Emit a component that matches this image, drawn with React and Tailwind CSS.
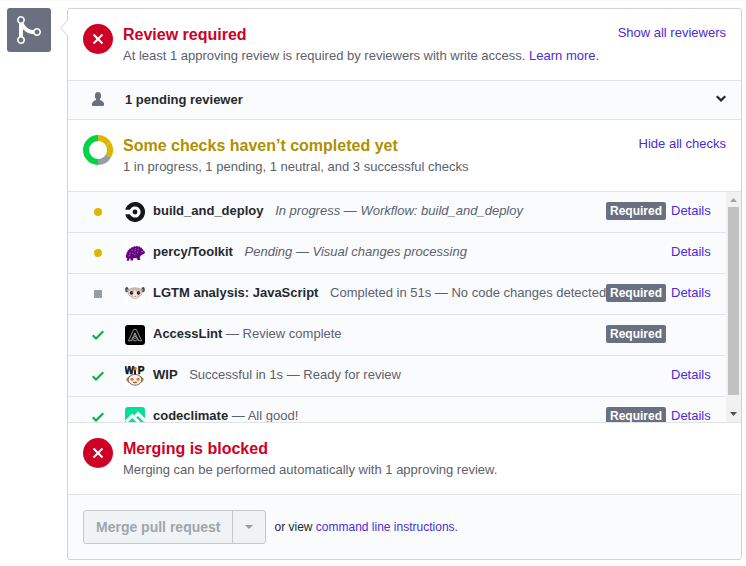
import React from "react";

function XIcon() {
  return (
    <svg width="12" height="16" viewBox="0 0 12 16" fill="currentColor" aria-hidden="true">
      <path d="M7.48 8l3.75 3.75-1.48 1.48L6 9.48l-3.75 3.75-1.48-1.48L4.52 8 .77 4.25l1.48-1.48L6 6.52l3.75-3.75 1.48 1.48L7.48 8z" />
    </svg>
  );
}

function CheckIcon() {
  return (
    <svg width="12" height="16" viewBox="0 0 12 16" fill="currentColor" aria-hidden="true">
      <path d="M12 5l-8 8-4-4 1.5-1.5L4 10l6.5-6.5L12 5z" />
    </svg>
  );
}

function PersonIcon() {
  return (
    <svg width="12" height="16" viewBox="0 0 12 16" fill="currentColor" aria-hidden="true">
      <path d="M12 14.002a.998.998 0 0 1-.998.998H1.001A1 1 0 0 1 0 13.999V13c0-2.633 4-4 4-4s.229-.409 0-1c-.841-.62-.944-1.59-1-4 .173-2.413 1.867-3 3-3s2.827.586 3 3c-.056 2.41-.159 3.38-1 4-.229.59 0 1 0 1s4 1.367 4 4v1.002z" />
    </svg>
  );
}

function ChevronDownIcon() {
  return (
    <svg width="10" height="16" viewBox="0 0 10 16" fill="currentColor" aria-hidden="true">
      <path d="M5 11L0 6l1.5-1.5L5 7.75 8.5 4.5 10 6l-5 5z" />
    </svg>
  );
}

function MergeIcon() {
  return (
    <svg width="24" height="32" viewBox="0 0 12 16" fill="currentColor" aria-hidden="true">
      <path d="M10 7c-.73 0-1.38.41-1.73 1.02V8C7.22 7.98 6 7.64 5.14 6.98c-.75-.58-1.5-1.61-1.89-2.44A1.993 1.993 0 0 0 2 .99C.89.99 0 1.89 0 3a2 2 0 0 0 1 1.72v6.56c-.59.35-1 .99-1 1.72 0 1.11.89 2 2 2a1.993 1.993 0 0 0 1-3.72V7.67c.67.7 1.44 1.27 2.3 1.69.86.42 2.03.63 2.97.64v-.02c.36.61 1 1.02 1.73 1.02 1.11 0 2-.89 2-2 0-1.11-.89-2-2-2zm-6.8 6c0 .66-.55 1.2-1.2 1.2-.65 0-1.2-.55-1.2-1.2 0-.65.55-1.2 1.2-1.2.65 0 1.2.55 1.2 1.2zM2 4.2C1.34 4.2.8 3.65.8 3c0-.65.55-1.2 1.2-1.2.65 0 1.2.55 1.2 1.2 0 .65-.55 1.2-1.2 1.2zm8 6c-.66 0-1.2-.55-1.2-1.2 0-.65.55-1.2 1.2-1.2.65 0 1.2.55 1.2 1.2 0 .65-.55 1.2-1.2 1.2z" />
    </svg>
  );
}

function ProgressDonut() {
  return (
    <svg width="30" height="30" viewBox="0 0 30 30" fill="none" strokeWidth="6" aria-hidden="true">
      <path d="M15 3 A12 12 0 0 1 25.39 9" stroke="#dbb700" />
      <path d="M25.39 9 A12 12 0 0 1 25.39 21" stroke="#dbb700" />
      <path d="M25.39 21 A12 12 0 0 1 15 27" stroke="#959da5" />
      <path d="M15 27 A12 12 0 0 1 15 3" stroke="#00d346" />
    </svg>
  );
}

function CircleLogo() {
  return (
    <svg width="20" height="20" viewBox="0 0 20 20" aria-hidden="true">
      <circle cx="10" cy="10" r="2.4" fill="#161616" />
      <path
        d="M0.3 7.8 A10 10 0 1 1 0.3 12.2 H4.9 A5.6 5.6 0 1 0 4.9 7.8 Z"
        fill="#161616"
      />
    </svg>
  );
}

function PercyLogo() {
  return (
    <svg width="20" height="20" viewBox="0 0 20 20" aria-hidden="true">
      <rect width="20" height="20" rx="3" fill="#fff" />
      <path
        d="M1 14.6 L0.8 12 L1.6 11.4 L1.5 9.6 L2.5 9.2 L2.6 7.4 L4 7.1 L4.4 5.4 L6 5.4 L6.8 3.9 L8.2 4.3 L9.2 3 L10.6 3.7 L12 2.7 L13 3.7 L14.6 3.2 L15 4.5 L16.6 4.6 L17 5.9 L18.2 6.3 L18.3 7.6 L20 8.8 L19.6 10.4 L17.6 11.6 L15.4 13 L14.8 15 L15.4 17 L12.4 17 L12 15.2 L8.6 15 L8 17.6 L5.4 17.6 L5.6 15.6 L4.4 15.4 L4 17.8 L1.4 17.8 L2.4 15.8 Z"
        fill="#650380"
      />
      <path
        d="M4 10.6 l1.8-.8 M3.6 13 l1.8-.9 M6.4 7.6 l1.7-.7 M6.8 10.6 l1.6-.9 M9.4 8.2 l1.7-.9 M9.8 6 l1.3-.6 M12.6 6.4 l1.5-.5 M9 12 l1.6-.9 M12 9.6 l1.5-.8"
        stroke="#c99ad8"
        strokeWidth="0.6"
      />
      <circle cx="17" cy="8.8" r="0.5" fill="#fff" />
    </svg>
  );
}

function LgtmLogo() {
  return (
    <svg width="20" height="20" viewBox="0 0 20 20" aria-hidden="true">
      <rect width="20" height="20" rx="3" fill="#fff" />
      <ellipse cx="1.9" cy="5.6" rx="1.7" ry="2.7" fill="#40363b" />
      <ellipse cx="18.1" cy="5.6" rx="1.7" ry="2.7" fill="#40363b" />
      <ellipse cx="2.3" cy="6" rx="0.8" ry="1.6" fill="#a58f95" />
      <ellipse cx="17.7" cy="6" rx="0.8" ry="1.6" fill="#a58f95" />
      <path d="M10 3.2 C15.4 3.2 17.8 6 17.4 9 C17 12 14.4 12.6 12.8 14 C11.6 15.3 8.4 15.3 7.2 14 C5.6 12.6 3 12 2.6 9 C2.2 6 4.6 3.2 10 3.2Z" fill="#cbb4b0" />
      <path d="M10 5.4 Q12.4 9.6 12.6 12 Q12.4 14.6 10 14.6 Q7.6 14.6 7.4 12 Q7.6 9.6 10 5.4Z" fill="#efe2df" />
      <circle cx="6.4" cy="8.9" r="2.5" fill="#f3eae8" />
      <circle cx="13.6" cy="8.9" r="2.5" fill="#f3eae8" />
      <circle cx="6.5" cy="8.9" r="1.8" fill="#2d1c24" />
      <circle cx="13.5" cy="8.9" r="1.8" fill="#2d1c24" />
      <circle cx="7" cy="8.4" r="0.4" fill="#fff" />
      <circle cx="14" cy="8.4" r="0.4" fill="#fff" />
      <path d="M9 12 H11 L10 13.1Z" fill="#a2555f" />
    </svg>
  );
}

function AccessLintLogo() {
  return (
    <svg width="20" height="20" viewBox="0 0 20 20" fill="none" aria-hidden="true">
      <rect width="20" height="20" rx="3" fill="#000" />
      <path
        d="M8.8 4.4 H11.2 L16.6 15.8 H13.8 L10 8 L6.2 15.8 H3.4 Z M10 8 V11 M7.4 13.4 L10 11 L12.6 13.4 M6.2 15.8 L10 12.8 L13.8 15.8 M8.2 15.8 H11.8"
        stroke="#b5b5b5"
        strokeWidth="0.8"
      />
    </svg>
  );
}

function WipLogo() {
  return (
    <svg width="20" height="20" viewBox="0 0 20 20" aria-hidden="true">
      <rect width="20" height="20" rx="3" fill="#fff" />
      <ellipse cx="10" cy="13.6" rx="8.2" ry="4" fill="#e5bd1b" stroke="#5a5048" strokeWidth="0.8" />
      <ellipse cx="10" cy="13.8" rx="6.8" ry="5.4" fill="#f5f1e8" stroke="#5a5048" strokeWidth="0.8" />
      <circle cx="7" cy="13.2" r="1.5" fill="#ee6a1c" />
      <circle cx="13" cy="13.2" r="1.5" fill="#ee6a1c" />
      <path d="M8 16.2 Q10 17.6 12 16.2Z" fill="#c3322d" stroke="#8c2b24" strokeWidth="0.5" />
      <path d="M10 3 V8.6" stroke="#222" strokeWidth="2" />
      <circle cx="10" cy="2.6" r="1.8" fill="#ee6a1c" />
      <text
        x="-0.4"
        y="8.4"
        fontSize="10"
        fontWeight="700"
        fontFamily="Liberation Sans, sans-serif"
        fill="#111"
        stroke="#111"
        strokeWidth="0.5"
      >
        W
      </text>
      <text
        x="12.8"
        y="8.4"
        fontSize="10"
        fontWeight="700"
        fontFamily="Liberation Sans, sans-serif"
        fill="#111"
        stroke="#111"
        strokeWidth="0.5"
      >
        P
      </text>
    </svg>
  );
}

function CodeClimateLogo() {
  return (
    <svg width="20" height="20" viewBox="0 0 20 20" aria-hidden="true">
      <rect width="20" height="20" rx="3" fill="#00e096" />
      <path d="M13 4.2 L20 11.2 V14.8 L18.4 14.4 L13 9 L11.3 10.6 L9.1 8.2 Z" fill="#fff" />
      <path d="M7.2 6.4 L15.2 14.4 L13 16.6 L7.2 11 L2.2 15.8 L0 13.6 Z" fill="#fff" />
    </svg>
  );
}

const CHECKS = [
  { name: "build_and_deploy", text: "In progress — Workflow: build_and_deploy", status: "pending", logo: CircleLogo, required: true, details: true, italic: true, spaced: true },
  { name: "percy/Toolkit", text: "Pending — Visual changes processing", status: "pending", logo: PercyLogo, required: false, details: true, italic: true, spaced: true },
  { name: "LGTM analysis: JavaScript", text: "Completed in 51s — No code changes detected", status: "neutral", logo: LgtmLogo, required: true, details: true, spaced: true },
  { name: "AccessLint", text: "— Review complete", status: "success", logo: AccessLintLogo, required: true, details: false },
  { name: "WIP", text: "Successful in 1s — Ready for review", status: "success", logo: WipLogo, required: false, details: true, spaced: true },
  { name: "codeclimate", text: "— All good!", status: "success", logo: CodeClimateLogo, required: true, details: true },
];

function Status({ kind }) {
  if (kind === "success") return <CheckIcon />;
  if (kind === "neutral") return <span className="size-2 bg-[#959da5]" />;
  return <span className="size-2 rounded-full bg-[#dbb700]" />;
}

function CheckRow({ check }) {
  const Logo = check.logo;
  return (
    <li className="flex items-start border-b border-[#dfe2e8] px-[15px] py-[10px] last:border-b-0">
      <span className="flex h-5 w-[30px] shrink-0 items-center justify-center text-[#00b33c]">
        <Status kind={check.status} />
      </span>
      <span className="ml-3 size-5 shrink-0">
        <Logo />
      </span>
      <div className="ml-2 min-w-0 flex-1 whitespace-nowrap leading-[18px] text-[#5b616d]">
        <strong className={check.spaced ? "mr-2 text-[#24292e]" : "text-[#24292e]"}>{check.name}</strong>{" "}
        <span className={check.italic ? "italic" : ""}>{check.text}</span>
      </div>
      {check.required && (
        <span className="shrink-0 rounded-[2px] bg-[#6a7080] px-1 text-[12px] leading-[18px] font-bold text-white">
          Required
        </span>
      )}
      <span className="w-[45px] shrink-0 pl-[5px] leading-[18px]">
        {check.details && (
          <a href="#details" className="text-[#4c2bd9] hover:underline">
            Details
          </a>
        )}
      </span>
    </li>
  );
}

function Section({ icon, title, titleClass, children, action }) {
  return (
    <section className="flex items-start border-b border-[#dfe2e8] p-[15px]">
      <span className="size-[30px] shrink-0">{icon}</span>
      <div className="ml-[10px] min-w-0 flex-1">
        <h2 className={titleClass}>{title}</h2>
        <p className="leading-[19px] text-[#5b616d]">{children}</p>
      </div>
      {action}
    </section>
  );
}

function BlockedBadge() {
  return (
    <span className="flex size-[30px] items-center justify-center rounded-full bg-[#cf0026] text-white">
      <XIcon />
    </span>
  );
}

export default function App() {
  return (
    <main className="flex items-start border-t border-[#fafafb] bg-white pt-[7px] pr-1 pb-[6px] pl-[7px] font-['Liberation_Sans',Arial,sans-serif] text-[13px] text-[#24292e]">
      <div className="flex size-11 shrink-0 items-center justify-center rounded-[3px] bg-[#6a7080] text-white">
        <MergeIcon />
      </div>

      <div className="relative ml-4 min-w-0 flex-1 rounded-[3px] border border-[#cfd2d9] bg-white">
        <svg className="absolute top-[11px] -left-2" width="8" height="16" viewBox="0 0 8 16" aria-hidden="true">
          <path d="M8 0 L0.7 8 L8 16Z" fill="#fff" />
          <path d="M7.5 0.5 L0.7 8 L7.5 15.5" fill="none" stroke="#cfd2d9" />
        </svg>

        <Section
          icon={<BlockedBadge />}
          title="Review required"
          titleClass="text-[16px] leading-[22px] font-bold text-[#cf0026]"
          action={
            <button type="button" className="leading-[17px] text-[#4c2bd9] hover:underline">
              Show all reviewers
            </button>
          }
        >
          At least 1 approving review is required by reviewers with write access.{" "}
          <a href="#learn-more" className="text-[#4c2bd9] hover:underline">
            Learn more.
          </a>
        </Section>

        <button
          type="button"
          className="flex w-full items-start border-b border-[#dfe2e8] bg-[#fafbfd] px-[15px] py-[9px] text-left"
        >
          <span className="flex h-[18px] w-[30px] items-center justify-center text-[#6a7080]">
            <PersonIcon />
          </span>
          <strong className="ml-3 flex-1 leading-5">1 pending reviewer</strong>
          <span className="flex h-[18px] items-center">
            <ChevronDownIcon />
          </span>
        </button>

        <Section
          icon={<ProgressDonut />}
          title="Some checks haven’t completed yet"
          titleClass="text-[16px] leading-[22px] font-bold text-[#b09000]"
          action={
            <button type="button" className="leading-[17px] text-[#4c2bd9] hover:underline">
              Hide all checks
            </button>
          }
        >
          1 in progress, 1 pending, 1 neutral, and 3 successful checks
        </Section>

        <div className="flex h-[231px] border-b border-[#dfe2e8] bg-[#fafbfd]">
          <ul className="min-w-0 flex-1 overflow-x-hidden overflow-y-auto [scrollbar-width:none]">
            {CHECKS.map((check) => (
              <CheckRow key={check.name} check={check} />
            ))}
          </ul>
          <div className="flex w-[15px] shrink-0 flex-col items-center bg-[#f1f1f1]" aria-hidden="true">
            <svg width="15" height="15" viewBox="0 0 15 15">
              <path d="M4 10 L7.5 6 L11 10Z" fill="#a3a3a3" />
            </svg>
            <span className="h-[188px] w-[11px] bg-[#c1c1c1]" />
            <span className="flex-1" />
            <svg width="15" height="15" viewBox="0 0 15 15">
              <path d="M4 5 L7.5 9 L11 5Z" fill="#505050" />
            </svg>
          </div>
        </div>

        <Section
          icon={<BlockedBadge />}
          title="Merging is blocked"
          titleClass="text-[16px] leading-[22px] font-bold text-[#cf0026]"
        >
          Merging can be performed automatically with 1 approving review.
        </Section>

        <footer className="flex items-center rounded-b-[3px] bg-[#fafbfd] p-[15px]">
          <button
            type="button"
            disabled
            className="h-[34px] rounded-l-[3px] border border-[#c5c9ce] bg-[#eff3f6] px-3 text-[14px] leading-5 font-bold text-[#a0a5ab]"
          >
            Merge pull request
          </button>
          <button
            type="button"
            disabled
            aria-label="Select merge method"
            className="-ml-px flex h-[34px] w-[34px] items-center justify-center rounded-r-[3px] border border-[#c5c9ce] bg-[#eff3f6]"
          >
            <svg width="8" height="4" viewBox="0 0 8 4" aria-hidden="true">
              <path d="M0 0 H8 L4 4Z" fill="#999da3" />
            </svg>
          </button>
          <p className="ml-2 text-[12px] leading-[18px]">
            or view{" "}
            <a href="#command-line" className="text-[#4c2bd9] hover:underline">
              command line instructions.
            </a>
          </p>
        </footer>
      </div>
    </main>
  );
}
